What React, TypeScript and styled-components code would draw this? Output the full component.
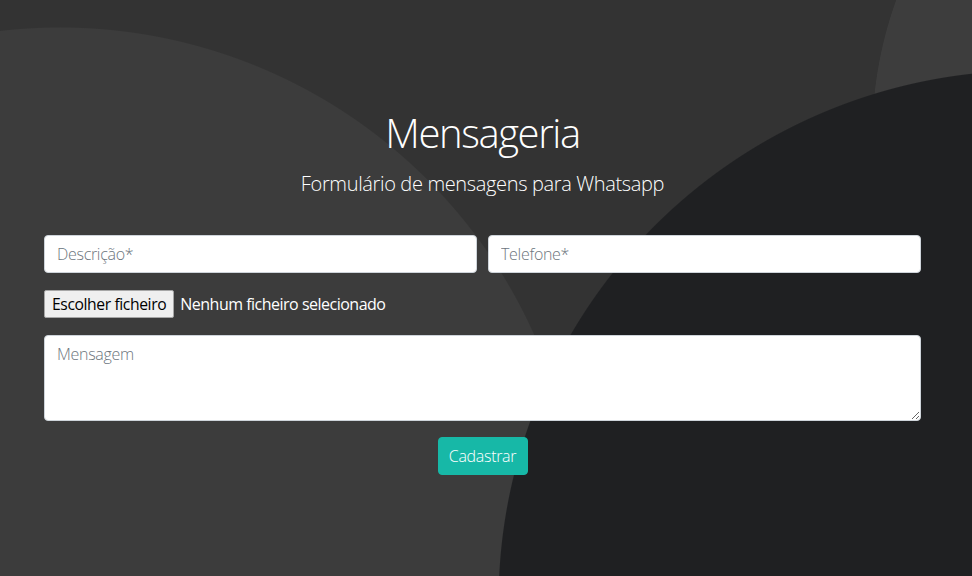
import * as React from "react";
import styled, { createGlobalStyle } from "styled-components";

const GlobalStyle = createGlobalStyle`
  html, body {
    margin: 0;
    height: 100%;
  }
  body {
    font-family: "Open Sans", "Noto Sans", sans-serif;
    overflow: hidden;
  }
  #root {
    height: 100%;
  }
`;

// three flat circles laid over the base grey, darkest one on top
const Page = styled.main`
  box-sizing: border-box;
  height: 100%;
  padding-top: 109px;
  background:
    radial-gradient(circle 532px at 1030px 602px, #1f2022 99.8%, transparent 100%),
    radial-gradient(circle 400px at 1272px 136px, #3d3d3d 99.8%, transparent 100%),
    radial-gradient(circle 520px at 60px 547px, #3c3c3c 99.8%, transparent 100%),
    #333333;
  color: #fff;
`;

const Container = styled.div`
  width: 877px;
  margin-left: 44px;
`;

const Title = styled.h1`
  margin: 0;
  font-size: 40px;
  font-weight: 300;
  line-height: 1.2;
  text-align: center;
  letter-spacing: -1.4px;
`;

const Subtitle = styled.p`
  margin: 12px 0 0;
  font-size: 20px;
  font-weight: 300;
  line-height: 1.5;
  text-align: center;
  letter-spacing: -0.35px;
`;

const Form = styled.form`
  margin-top: 36px;
  display: flex;
  flex-direction: column;
`;

const Row = styled.div`
  display: grid;
  grid-template-columns: 1fr 1fr;
  gap: 11px;
`;

const fieldStyles = `
  box-sizing: border-box;
  width: 100%;
  border: 1px solid #ced4da;
  border-radius: 4px;
  background: #fff;
  padding: 6px 12px;
  font-family: "Open Sans", "Noto Sans", sans-serif;
  font-size: 16px;
  font-weight: 300;
  line-height: 24px;
  color: #495057;
  letter-spacing: -0.3px;
  outline: none;
  &::placeholder {
    color: #6c757d;
  }
`;

const Input = styled.input`
  ${fieldStyles}
  height: 38px;
`;

const TextArea = styled.textarea`
  ${fieldStyles}
  display: block;
  height: 86px;
  margin-top: 17px;
`;

const FileRow = styled.div`
  margin-top: 17px;
  height: 28px;
  display: flex;
  align-items: center;
  gap: 6px;
`;

const FileButton = styled.span`
  box-sizing: border-box;
  height: 28px;
  display: inline-flex;
  align-items: center;
  padding: 0 7px;
  background: #efefef;
  border: 1px solid #a6a6a6;
  border-radius: 2px;
  color: #000;
  font-size: 15.7px;
  letter-spacing: -0.4px;
`;

const FileStatus = styled.span`
  font-size: 16px;
  letter-spacing: -0.5px;
  color: #fff;
`;

const Submit = styled.button`
  align-self: center;
  margin-top: 16px;
  height: 38px;
  width: 90px;
  border: 1px solid #17b8a7;
  border-radius: 4px;
  background: #17b8a7;
  color: #fff;
  font-family: "Open Sans", "Noto Sans", sans-serif;
  font-size: 16px;
  font-weight: 300;
  letter-spacing: -0.3px;
  cursor: pointer;
`;

export default function App() {
  return (
    <>
      <GlobalStyle />
      <Page>
        <Container>
          <Title>Mensageria</Title>
          <Subtitle>Formulário de mensagens para Whatsapp</Subtitle>
          <Form onSubmit={e => e.preventDefault()}>
            <Row>
              <Input type="text" placeholder="Descrição*" />
              <Input type="text" placeholder="Telefone*" />
            </Row>
            <FileRow>
              <FileButton>Escolher ficheiro</FileButton>
              <FileStatus>Nenhum ficheiro selecionado</FileStatus>
            </FileRow>
            <TextArea placeholder="Mensagem" rows={3} />
            <Submit type="submit">Cadastrar</Submit>
          </Form>
        </Container>
      </Page>
    </>
  );
}
